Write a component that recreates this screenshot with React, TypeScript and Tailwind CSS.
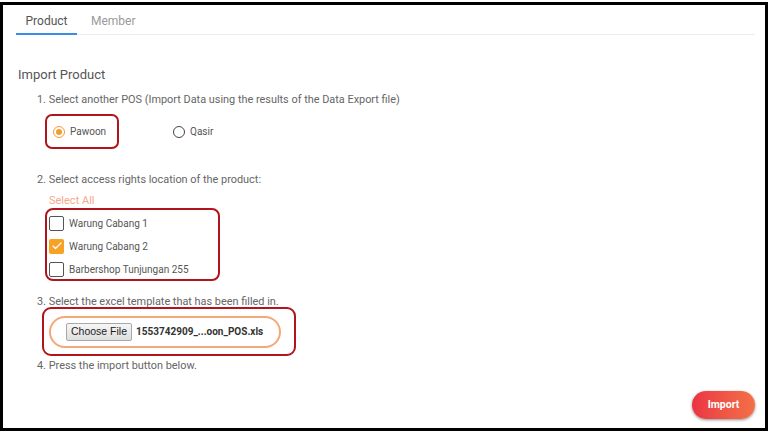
import { Check } from "lucide-react";

const locations = [
  { name: "Warung Cabang 1", checked: false },
  { name: "Warung Cabang 2", checked: true },
  { name: "Barbershop Tunjungan 255", checked: false },
];

export default function App() {
  return (
    <div className="w-[770px] h-[433px] bg-white pt-[2px] font-['Roboto',sans-serif]">
      <div className="w-[768px] h-[429px] border-[3px] border-black bg-white px-[13px] relative">
        {/* tabs */}
        <div className="flex border-b border-[#ececec] w-[739px] h-[30px] text-[12px]">
          <div className="w-[61px] flex justify-center pt-[7px] text-[#555] border-b-2 border-[#3a8ee6] -mb-[1px]">
            Product
          </div>
          <div className="ml-[14px] pt-[7px] text-[#9a9a9a]">Member</div>
        </div>

        <div className="pl-[2px] pt-[32px] text-[#555]">
          <h2 className="text-[13px] leading-[16px]">Import Product</h2>

          <p className="mt-[10px] ml-[19px] text-[10.9px] leading-[14px] text-[#666]">
            1. Select another POS (Import Data using the results of the Data Export file)
          </p>
          <div className="mt-[7px] ml-[27px] flex items-center">
            <div className="w-[74px] h-[35px] border-2 border-[#b0141c] rounded-[7px] flex items-center pl-[6px] gap-[5px]">
              <span className="w-[12px] h-[12px] rounded-full border-[1.5px] border-[#f79a2e] flex items-center justify-center">
                <span className="w-[6px] h-[6px] rounded-full bg-[#f79a2e]" />
              </span>
              <span className="text-[10px] text-[#555]">Pawoon</span>
            </div>
            <div className="ml-[54px] flex items-center gap-[5px]">
              <span className="w-[12px] h-[12px] rounded-full border-[1.5px] border-[#444]" />
              <span className="text-[10px] text-[#555]">Qasir</span>
            </div>
          </div>

          <p className="mt-[24px] ml-[19px] text-[10.9px] leading-[14px] text-[#666]">
            2. Select access rights location of the product:
          </p>
          <p className="mt-[7px] ml-[31px] text-[11px] leading-[14px] text-[#f8a88a]">Select All</p>
          <div className="ml-[27px] w-[175px] h-[73px] border-2 border-[#b0141c] rounded-[8px] flex flex-col justify-center gap-[8px] pl-[2px] pt-[3px]">
            {locations.map((l) => (
              <div key={l.name} className="flex items-center gap-[5px]">
                {l.checked ? (
                  <span className="w-[15px] h-[15px] rounded-[2px] bg-[#f7a125] flex items-center justify-center">
                    <Check size={12} strokeWidth={2.5} className="text-white" />
                  </span>
                ) : (
                  <span className="w-[15px] h-[15px] rounded-[2px] border-[1.5px] border-[#555]" />
                )}
                <span className="text-[10px] text-[#555]">{l.name}</span>
              </div>
            ))}
          </div>

          <p className="mt-[14px] ml-[19px] text-[10.9px] leading-[14px] text-[#666]">
            3. Select the excel template that has been filled in.
          </p>
          <div className="-mt-[2px] ml-[24px] w-[254px] h-[49px] border-2 border-[#b0141c] rounded-[9px] flex items-center pl-[5px]">
            <div className="w-[232px] h-[32px] border-2 border-[#f5a77a] rounded-full flex items-center pl-[15px] gap-[4px]">
              <button className="h-[18px] px-[4px] border border-[#a8a8a8] rounded-[2px] bg-gradient-to-b from-[#f6f6f6] to-[#dedede] text-[10.5px] text-[#222] leading-none font-['Liberation_Sans',sans-serif]">
                Choose File
              </button>
              <span className="text-[10px] font-bold text-[#333]">1553742909_...oon_POS.xls</span>
            </div>
          </div>

          <p className="mt-[3px] ml-[19px] text-[10.9px] leading-[14px] text-[#666]">4. Press the import button below.</p>
        </div>

        <div className="absolute right-[10px] bottom-[9px]">
          <button className="w-[63px] h-[28px] rounded-full bg-gradient-to-r from-[#ea3344] to-[#f36f48] text-white text-[10.5px] font-bold shadow-[0_1px_3px_rgba(0,0,0,0.45)]">
            Import
          </button>
        </div>
      </div>
    </div>
  );
}
